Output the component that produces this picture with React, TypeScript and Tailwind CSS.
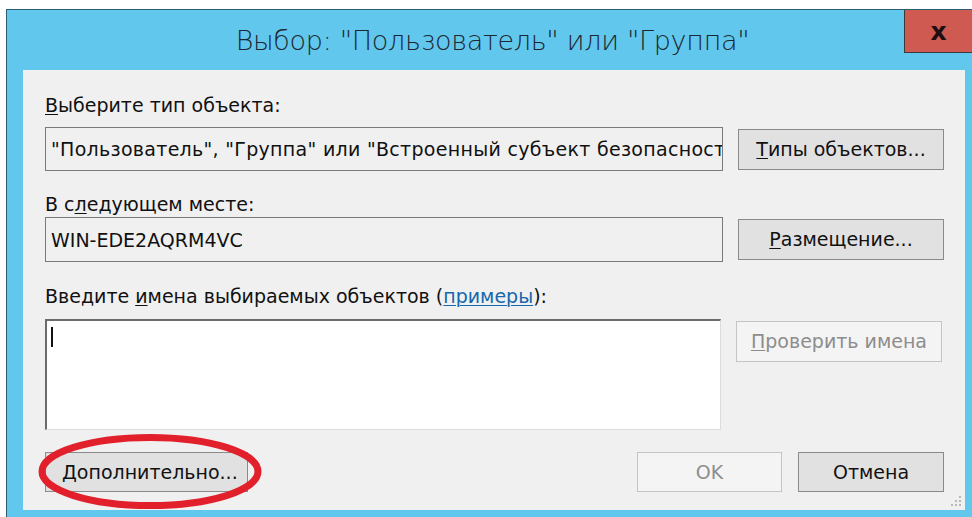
import React from "react";

const ui = "font-['DejaVu_Sans','Liberation_Sans',sans-serif]";

function Accel({ children }: { children: React.ReactNode }) {
  return <span className="underline underline-offset-2 decoration-1">{children}</span>;
}

function Btn({
  children,
  className = "",
  disabled = false,
}: {
  children: React.ReactNode;
  className?: string;
  disabled?: boolean;
}) {
  return (
    <button
      disabled={disabled}
      className={
        "flex items-center justify-center border text-[19px] leading-none " +
        (disabled
          ? "border-[#c4c4c4] bg-[#f4f4f4] text-[#8d8d8d]"
          : "border-[#8a8a8a] bg-[#e1e1e1] text-[#111]") +
        " " +
        className
      }
    >
      {children}
    </button>
  );
}

export default function App() {
  return (
    <div className={`w-[972px] h-[517px] bg-white pt-[9px] pl-[6px] overflow-hidden ${ui}`}>
      <div className="flex h-[508px] w-[966px] flex-col border-l border-t border-[#2d5b70] bg-[#62c7ec]">
        {/* title bar */}
        <div className="grid h-[60px] grid-cols-[68px_1fr_68px]">
          <div />
          <div className="flex items-center justify-center pt-[2px] pl-[6px] text-[27px] font-light tracking-[-0.3px] text-[#1b2733]">
            Выбор: "Пользователь" или "Группа"
          </div>
          <div className="flex h-[43px] items-center justify-center border-b border-l border-[#3b3b3b] bg-[#cf5a52]">
            <span className="text-[25px] font-bold leading-none text-[#1a1010]">x</span>
          </div>
        </div>

        {/* client area */}
        <div className="relative ml-[16px] mr-[7px] flex flex-col bg-[#f0f0f0] pl-[22px] pr-[21px] pb-[18px] text-[19px] leading-[22px] text-[#111]">
          <div className="mt-[24px]">
            <Accel>В</Accel>ыберите тип объекта:
          </div>
          <div className="mt-[11px] flex h-[44px] items-center gap-[15px]">
            <div className="flex h-full w-[678px] items-center overflow-hidden whitespace-nowrap border border-[#7a7a7a] bg-[#f0f0f0] pl-[5px] tracking-[0.3px]">
              "Пользователь", "Группа" или "Встроенный субъект безопасности"
            </div>
            <Btn className="h-[41px] w-[206px]">
              <Accel>Т</Accel>ипы объектов...
            </Btn>
          </div>

          <div className="mt-[22px]">
            В с<Accel>л</Accel>едующем месте:
          </div>
          <div className="mt-[2px] flex h-[45px] items-center gap-[15px]">
            <div className="flex h-full w-[678px] items-center border border-[#7a7a7a] bg-[#f0f0f0] pl-[5px]">
              WIN-EDE2AQRM4VC
            </div>
            <Btn className="h-[41px] w-[206px]">
              <Accel>Р</Accel>азмещение...
            </Btn>
          </div>

          <div className="mt-[23px]">
            Введите <Accel>и</Accel>мена выбираемых объектов (
            <span className="text-[#1667ad] underline underline-offset-2 decoration-1">примеры</span>):
          </div>
          <div className="mt-[12px] flex items-start gap-[15px]">
            <div className="h-[111px] w-[676px] border-l-2 border-t-2 border-r border-b border-l-[#6c6c6c] border-t-[#6c6c6c] border-r-[#dcdcdc] border-b-[#dcdcdc] bg-white pl-[4px] pt-[6px]">
              <div className="h-[20px] w-[2px] bg-[#111]" />
            </div>
            <Btn disabled className="mt-[2px] h-[41px] w-[206px]">
              <Accel>П</Accel>роверить имена
            </Btn>
          </div>

          <div className="mt-[22px] flex h-[40px] items-center">
            <div className="relative">
              <Btn className="h-[40px] w-[203px] justify-start pl-[16px]">
                <Accel>Д</Accel>ополнительно...
              </Btn>
              {/* red marker ring */}
              <svg
                className="pointer-events-none absolute left-[-8px] top-[-19px]"
                width="226"
                height="77"
                viewBox="0 0 226 77"
              >
                <ellipse cx="113" cy="38.5" rx="108" ry="34" fill="none" stroke="#e2202b" strokeWidth="7" />
              </svg>
            </div>
            <div className="flex-1" />
            <Btn disabled className="h-[40px] w-[145px]">
              OK
            </Btn>
            <Btn className="ml-[16px] h-[40px] w-[146px] border-[#6b6b6b]">Отмена</Btn>
          </div>

          {/* size grip */}
          <svg className="absolute bottom-[3px] right-[3px]" width="12" height="12" viewBox="0 0 12 12">
            <g fill="#b8b8b8">
              <rect x="9" y="1" width="2" height="2" />
              <rect x="5" y="5" width="2" height="2" />
              <rect x="9" y="5" width="2" height="2" />
              <rect x="1" y="9" width="2" height="2" />
              <rect x="5" y="9" width="2" height="2" />
              <rect x="9" y="9" width="2" height="2" />
            </g>
          </svg>
        </div>
      </div>
    </div>
  );
}
